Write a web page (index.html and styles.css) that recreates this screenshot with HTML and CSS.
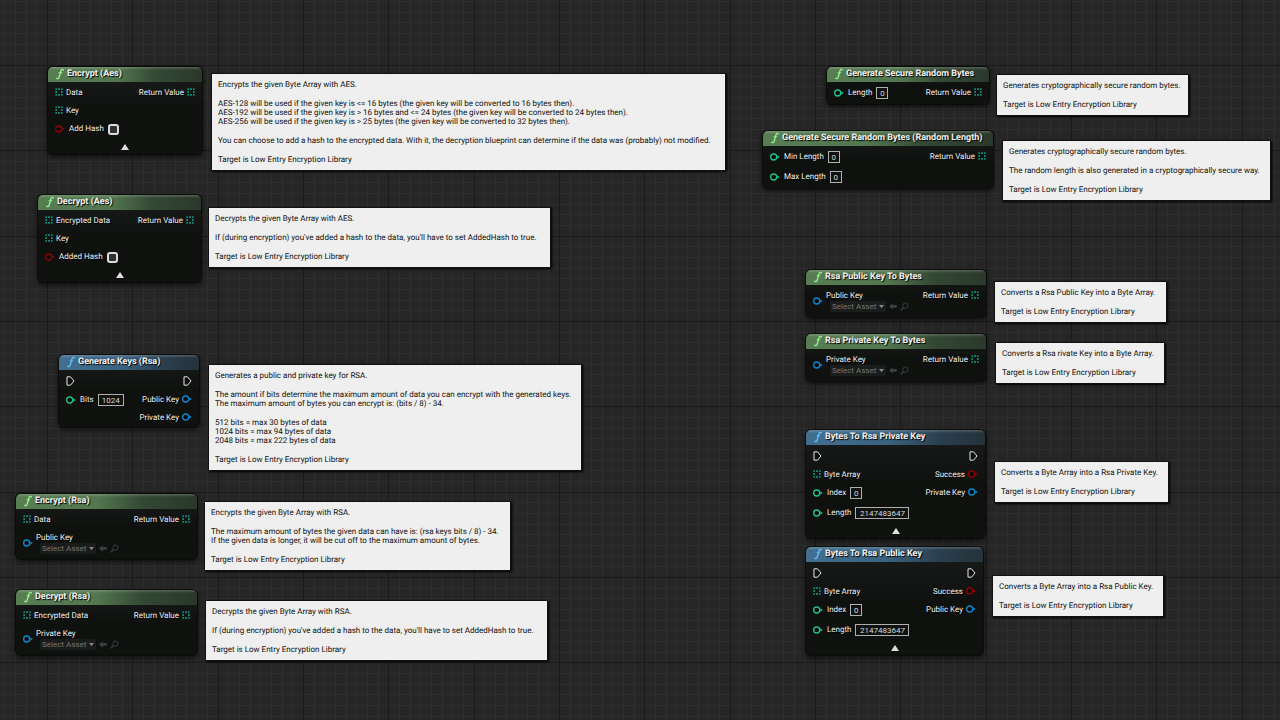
FILE: index.html
```html
<!DOCTYPE html>
<html lang="en">
<head>
    <meta charset="UTF-8">
    <meta name="viewport" content="width=device-width, initial-scale=1.0">
    <title>Low Entry Encryption Library</title>
    <link rel="stylesheet" href="styles.css">
</head>
<body>
    <!-- shared icons -->
    <svg class="symbols" width="0" height="0" aria-hidden="true">
        <symbol id="func" viewBox="0 0 10 14">
            <path d="M9.200 2.200C8.600 0.800 6.900 0.900 6.200 3L4 10.800C3.500 12.800 2 13.200 0.900 12.200" fill="none" stroke="currentColor" stroke-width="1.700" stroke-linecap="round"/>
            <path d="M3.200 5.400H7.800" stroke="currentColor" stroke-width="1.300"/>
        </symbol>
        <symbol id="array" viewBox="0 0 24 24">
            <path d="M1 1h5v5H1zM9 1h6v5H9zM18 1h5v5h-5zM1 9h5v6H1zM18 9h5v6h-5zM1 18h5v5H1zM9 18h6v5H9zM18 18h5v5h-5z" fill="currentColor"/>
        </symbol>
        <symbol id="pin" viewBox="0 0 30 24">
            <circle cx="11" cy="12" r="9" fill="#050807" stroke="currentColor" stroke-width="4"/>
            <path d="M22 7l7 5-7 5z" fill="currentColor"/>
        </symbol>
        <symbol id="exec" viewBox="0 0 27 30">
            <path d="M3 2.500h10.500L24 15 13.500 27.500H3z" fill="#0c0f0d" stroke="currentColor" stroke-width="3" stroke-linejoin="round"/>
        </symbol>
        <symbol id="expand" viewBox="0 0 24 18">
            <path d="M12 0l12 18H0z" fill="currentColor"/>
        </symbol>
        <symbol id="down" viewBox="0 0 18 10">
            <path d="M0 0h18L9 10z" fill="currentColor"/>
        </symbol>
        <symbol id="use-asset" viewBox="0 0 24 21">
            <path d="M11 1v5h12v8H11v6L0 10.500z" fill="currentColor"/>
        </symbol>
        <symbol id="browse" viewBox="0 0 27 27">
            <circle cx="16" cy="11" r="8" fill="none" stroke="currentColor" stroke-width="3"/>
            <path d="M10 17l-8 8" stroke="currentColor" stroke-width="4"/>
        </symbol>
    </svg>

    <main class="graph">
        <section class="node encrypt-aes">
            <h2 class="title"><svg class="func"><use href="#func"/></svg>Encrypt (Aes)</h2>
            <div class="pins">
                <div class="inputs">
                    <div class="row"><svg class="array"><use href="#array"/></svg>Data</div>
                    <div class="row"><svg class="array"><use href="#array"/></svg>Key</div>
                    <div class="row field"><svg class="pin bool"><use href="#pin"/></svg><label for="add-hash">Add Hash</label><input type="checkbox" id="add-hash"></div>
                </div>
                <div class="outputs">
                    <div class="row">Return Value<svg class="array"><use href="#array"/></svg></div>
                </div>
            </div>
            <button class="expand" aria-label="Collapse"><svg><use href="#expand"/></svg></button>
        </section>
        <div class="comment c-encrypt-aes">
            <p>Encrypts the given Byte Array with AES.</p>
            <p>AES-128 will be used if the given key is &lt;= 16 bytes (the given key will be converted to 16 bytes then).<br>AES-192 will be used if the given key is &gt; 16 bytes and &lt;= 24 bytes (the given key will be converted to 24 bytes then).<br>AES-256 will be used if the given key is &gt; 25 bytes (the given key will be converted to 32 bytes then).</p>
            <p>You can choose to add a hash to the encrypted data. With it, the decryption blueprint can determine if the data was (probably) not modified.</p>
            <p>Target is Low Entry Encryption Library</p>
        </div>

        <section class="node decrypt-aes">
            <h2 class="title"><svg class="func"><use href="#func"/></svg>Decrypt (Aes)</h2>
            <div class="pins">
                <div class="inputs">
                    <div class="row"><svg class="array"><use href="#array"/></svg>Encrypted Data</div>
                    <div class="row"><svg class="array"><use href="#array"/></svg>Key</div>
                    <div class="row field"><svg class="pin bool"><use href="#pin"/></svg><label for="added-hash">Added Hash</label><input type="checkbox" id="added-hash"></div>
                </div>
                <div class="outputs">
                    <div class="row">Return Value<svg class="array"><use href="#array"/></svg></div>
                </div>
            </div>
            <button class="expand" aria-label="Collapse"><svg><use href="#expand"/></svg></button>
        </section>
        <div class="comment c-decrypt-aes">
            <p>Decrypts the given Byte Array with AES.</p>
            <p>If (during encryption) you've added a hash to the data, you'll have to set AddedHash to true.</p>
            <p>Target is Low Entry Encryption Library</p>
        </div>

        <section class="node blue generate-keys">
            <h2 class="title"><svg class="func"><use href="#func"/></svg>Generate Keys (Rsa)</h2>
            <div class="pins">
                <div class="inputs">
                    <div class="row exec-row"><svg class="exec"><use href="#exec"/></svg></div>
                    <div class="row field"><svg class="pin int"><use href="#pin"/></svg><label for="bits">Bits</label><input type="text" id="bits" class="w-medium" value="1024"></div>
                </div>
                <div class="outputs">
                    <div class="row exec-row"><svg class="exec"><use href="#exec"/></svg></div>
                    <div class="row">Public Key<svg class="pin object"><use href="#pin"/></svg></div>
                    <div class="row">Private Key<svg class="pin object"><use href="#pin"/></svg></div>
                </div>
            </div>
        </section>
        <div class="comment c-generate-keys">
            <p>Generates a public and private key for RSA.</p>
            <p>The amount if bits determine the maximum amount of data you can encrypt with the generated keys.<br>The maximum amount of bytes you can encrypt is: (bits / 8) - 34.</p>
            <p>512 bits = max 30 bytes of data<br>1024 bits = max 94 bytes of data<br>2048 bits = max 222 bytes of data</p>
            <p>Target is Low Entry Encryption Library</p>
        </div>

        <section class="node encrypt-rsa">
            <h2 class="title"><svg class="func"><use href="#func"/></svg>Encrypt (Rsa)</h2>
            <div class="pins">
                <div class="inputs">
                    <div class="row"><svg class="array"><use href="#array"/></svg>Data</div>
                    <div class="row asset">
                        <svg class="pin object"><use href="#pin"/></svg>
                        <div class="picker">
                            <label for="encrypt-key">Public Key</label>
                            <div class="tools">
                                <span class="select"><select id="encrypt-key"><option>Select Asset</option></select><svg class="down"><use href="#down"/></svg></span>
                                <button aria-label="Use selected asset"><svg class="arrow"><use href="#use-asset"/></svg></button>
                                <button aria-label="Browse"><svg class="browse"><use href="#browse"/></svg></button>
                            </div>
                        </div>
                    </div>
                </div>
                <div class="outputs">
                    <div class="row">Return Value<svg class="array"><use href="#array"/></svg></div>
                </div>
            </div>
        </section>
        <div class="comment c-encrypt-rsa">
            <p>Encrypts the given Byte Array with RSA.</p>
            <p>The maximum amount of bytes the given data can have is: (rsa keys bits / 8) - 34.<br>If the given data is longer, it will be cut off to the maximum amount of bytes.</p>
            <p>Target is Low Entry Encryption Library</p>
        </div>

        <section class="node decrypt-rsa">
            <h2 class="title"><svg class="func"><use href="#func"/></svg>Decrypt (Rsa)</h2>
            <div class="pins">
                <div class="inputs">
                    <div class="row"><svg class="array"><use href="#array"/></svg>Encrypted Data</div>
                    <div class="row asset">
                        <svg class="pin object"><use href="#pin"/></svg>
                        <div class="picker">
                            <label for="decrypt-key">Private Key</label>
                            <div class="tools">
                                <span class="select"><select id="decrypt-key"><option>Select Asset</option></select><svg class="down"><use href="#down"/></svg></span>
                                <button aria-label="Use selected asset"><svg class="arrow"><use href="#use-asset"/></svg></button>
                                <button aria-label="Browse"><svg class="browse"><use href="#browse"/></svg></button>
                            </div>
                        </div>
                    </div>
                </div>
                <div class="outputs">
                    <div class="row">Return Value<svg class="array"><use href="#array"/></svg></div>
                </div>
            </div>
        </section>
        <div class="comment c-decrypt-rsa">
            <p>Decrypts the given Byte Array with RSA.</p>
            <p>If (during encryption) you've added a hash to the data, you'll have to set AddedHash to true.</p>
            <p>Target is Low Entry Encryption Library</p>
        </div>

        <section class="node secure-random">
            <h2 class="title"><svg class="func"><use href="#func"/></svg>Generate Secure Random Bytes</h2>
            <div class="pins">
                <div class="inputs">
                    <div class="row field"><svg class="pin int"><use href="#pin"/></svg><label for="length">Length</label><input type="text" id="length" value="0"></div>
                </div>
                <div class="outputs">
                    <div class="row">Return Value<svg class="array"><use href="#array"/></svg></div>
                </div>
            </div>
        </section>
        <div class="comment c-secure-random">
            <p>Generates cryptographically secure random bytes.</p>
            <p>Target is Low Entry Encryption Library</p>
        </div>

        <section class="node random-length">
            <h2 class="title"><svg class="func"><use href="#func"/></svg>Generate Secure Random Bytes (Random Length)</h2>
            <div class="pins">
                <div class="inputs">
                    <div class="row field"><svg class="pin int"><use href="#pin"/></svg><label for="min-length">Min Length</label><input type="text" id="min-length" value="0"></div>
                    <div class="row field"><svg class="pin int"><use href="#pin"/></svg><label for="max-length">Max Length</label><input type="text" id="max-length" value="0"></div>
                </div>
                <div class="outputs">
                    <div class="row">Return Value<svg class="array"><use href="#array"/></svg></div>
                </div>
            </div>
        </section>
        <div class="comment c-random-length">
            <p>Generates cryptographically secure random bytes.</p>
            <p>The random length is also generated in a cryptographically secure way.</p>
            <p>Target is Low Entry Encryption Library</p>
        </div>

        <section class="node public-to-bytes">
            <h2 class="title"><svg class="func"><use href="#func"/></svg>Rsa Public Key To Bytes</h2>
            <div class="pins">
                <div class="inputs">
                    <div class="row asset">
                        <svg class="pin object"><use href="#pin"/></svg>
                        <div class="picker">
                            <label for="public-key">Public Key</label>
                            <div class="tools">
                                <span class="select"><select id="public-key"><option>Select Asset</option></select><svg class="down"><use href="#down"/></svg></span>
                                <button aria-label="Use selected asset"><svg class="arrow"><use href="#use-asset"/></svg></button>
                                <button aria-label="Browse"><svg class="browse"><use href="#browse"/></svg></button>
                            </div>
                        </div>
                    </div>
                </div>
                <div class="outputs">
                    <div class="row">Return Value<svg class="array"><use href="#array"/></svg></div>
                </div>
            </div>
        </section>
        <div class="comment c-public-to-bytes">
            <p>Converts a Rsa Public Key into a Byte Array.</p>
            <p>Target is Low Entry Encryption Library</p>
        </div>

        <section class="node private-to-bytes">
            <h2 class="title"><svg class="func"><use href="#func"/></svg>Rsa Private Key To Bytes</h2>
            <div class="pins">
                <div class="inputs">
                    <div class="row asset">
                        <svg class="pin object"><use href="#pin"/></svg>
                        <div class="picker">
                            <label for="private-key">Private Key</label>
                            <div class="tools">
                                <span class="select"><select id="private-key"><option>Select Asset</option></select><svg class="down"><use href="#down"/></svg></span>
                                <button aria-label="Use selected asset"><svg class="arrow"><use href="#use-asset"/></svg></button>
                                <button aria-label="Browse"><svg class="browse"><use href="#browse"/></svg></button>
                            </div>
                        </div>
                    </div>
                </div>
                <div class="outputs">
                    <div class="row">Return Value<svg class="array"><use href="#array"/></svg></div>
                </div>
            </div>
        </section>
        <div class="comment c-private-to-bytes">
            <p>Converts a Rsa rivate Key into a Byte Array.</p>
            <p>Target is Low Entry Encryption Library</p>
        </div>

        <section class="node blue bytes-to-private">
            <h2 class="title"><svg class="func"><use href="#func"/></svg>Bytes To Rsa Private Key</h2>
            <div class="pins">
                <div class="inputs">
                    <div class="row exec-row"><svg class="exec"><use href="#exec"/></svg></div>
                    <div class="row"><svg class="array"><use href="#array"/></svg>Byte Array</div>
                    <div class="row field"><svg class="pin int"><use href="#pin"/></svg><label for="private-index">Index</label><input type="text" id="private-index" value="0"></div>
                    <div class="row field"><svg class="pin int"><use href="#pin"/></svg><label for="private-length">Length</label><input type="text" id="private-length" class="w-long" value="2147483647"></div>
                </div>
                <div class="outputs">
                    <div class="row exec-row"><svg class="exec"><use href="#exec"/></svg></div>
                    <div class="row">Success<svg class="pin bool"><use href="#pin"/></svg></div>
                    <div class="row">Private Key<svg class="pin object"><use href="#pin"/></svg></div>
                </div>
            </div>
            <button class="expand" aria-label="Collapse"><svg><use href="#expand"/></svg></button>
        </section>
        <div class="comment c-bytes-to-private">
            <p>Converts a Byte Array into a Rsa Private Key.</p>
            <p>Target is Low Entry Encryption Library</p>
        </div>

        <section class="node blue bytes-to-public">
            <h2 class="title"><svg class="func"><use href="#func"/></svg>Bytes To Rsa Public Key</h2>
            <div class="pins">
                <div class="inputs">
                    <div class="row exec-row"><svg class="exec"><use href="#exec"/></svg></div>
                    <div class="row"><svg class="array"><use href="#array"/></svg>Byte Array</div>
                    <div class="row field"><svg class="pin int"><use href="#pin"/></svg><label for="public-index">Index</label><input type="text" id="public-index" value="0"></div>
                    <div class="row field"><svg class="pin int"><use href="#pin"/></svg><label for="public-length">Length</label><input type="text" id="public-length" class="w-long" value="2147483647"></div>
                </div>
                <div class="outputs">
                    <div class="row exec-row"><svg class="exec"><use href="#exec"/></svg></div>
                    <div class="row">Success<svg class="pin bool"><use href="#pin"/></svg></div>
                    <div class="row">Public Key<svg class="pin object"><use href="#pin"/></svg></div>
                </div>
            </div>
            <button class="expand" aria-label="Collapse"><svg><use href="#expand"/></svg></button>
        </section>
        <div class="comment c-bytes-to-public">
            <p>Converts a Byte Array into a Rsa Public Key.</p>
            <p>Target is Low Entry Encryption Library</p>
        </div>
    </main>
</body>
</html>
```
FILE: styles.css
```css
* {
    box-sizing: border-box;
}

body {
    margin: 0;
    background-color: #262626;
    font-family: Roboto, sans-serif;
    font-size: 8px;
    text-rendering: geometricPrecision;
    color: #f0f0f0;
}

.symbols {
    position: absolute;
}

/* graph canvas: 8 small cells per large cell */
.graph {
    --cell: calc(32px / 3);
    --block: calc(256px / 3);
    position: relative;
    min-height: 100vh;
    overflow: hidden;
    background-image:
        repeating-linear-gradient(90deg, #1a1a1a 0 1px, transparent 1px var(--block)),
        repeating-linear-gradient(180deg, #1a1a1a 0 1px, transparent 1px var(--block)),
        repeating-linear-gradient(90deg, #2e2e2e 0 1px, transparent 1px var(--cell)),
        repeating-linear-gradient(180deg, #2e2e2e 0 1px, transparent 1px var(--cell));
    background-position: calc(47px - var(--block)) 0, 0 calc(65px - var(--block)), calc(47px - var(--block)) 0, 0 calc(65px - var(--block));
    background-size: 200% 200%;
}

/* nodes */
.node {
    position: absolute;
    border-radius: 5px;
    background: linear-gradient(#191c1a, #0e110e 50%, #0e110e);
    box-shadow: 0 0 0 1px #0a0c0a, 0 2px 5px 1px rgba(0, 0, 0, 0.6);
    overflow: hidden;
    text-shadow: 1px 1px 1px #000;
    white-space: nowrap;
}

.title {
    display: flex;
    align-items: center;
    gap: 3px;
    height: 15px;
    margin: 0;
    padding: 0 0 1px 8px;
    font-size: 9px;
    font-weight: bold;
    color: #f0f0f0;
    background: linear-gradient(rgba(255, 255, 255, 0.2), transparent 3px), linear-gradient(90deg, #587d53, #53774f 45%, #344834 70%, #2a382b);
}

.blue .title {
    background: linear-gradient(rgba(255, 255, 255, 0.2), transparent 3px), linear-gradient(90deg, #426f90, #3b6380 45%, #2a3f4f 75%, #253239);
}

.func {
    width: 8px;
    height: 12px;
    color: #93f28c;
}

.blue .func {
    color: #62bdf5;
}

.pins {
    display: flex;
    justify-content: space-between;
    padding: 1px 7px;
}

.inputs,
.outputs {
    display: flex;
    flex-direction: column;
}

.outputs {
    align-items: flex-end;
}

.row {
    display: flex;
    align-items: center;
    gap: 3px;
    height: 18px;
}

.exec-row {
    height: 19px;
}

.field {
    gap: 4px;
    height: 20px;
}

.field label {
    padding-bottom: 2px;
}

.array {
    width: 8px;
    height: 8px;
    color: #0b8a77;
}

.pin {
    width: 10px;
    height: 8px;
}

.bool {
    color: #920101;
}

.int {
    color: #1fc48b;
}

.object {
    color: #0c86cf;
}

.exec {
    width: 9px;
    height: 10px;
    color: #e8e8e8;
}

input {
    margin: 0;
    font: inherit;
}

input[type="text"] {
    width: 12px;
    height: 12px;
    padding: 0;
    border: 1px solid #b0b0b0;
    background-color: #101310;
    color: #d8d8d8;
    text-align: center;
}

input.w-medium {
    width: 26px;
}

input.w-long {
    width: 54px;
}

input[type="checkbox"] {
    appearance: none;
    width: 11px;
    height: 11px;
    border: 2px solid #dcdcdc;
    border-radius: 3px;
    background-color: #303030;
}

button {
    display: flex;
    padding: 0;
    border: none;
    background: none;
    color: #3c3f3d;
}

.expand {
    width: 100%;
    height: 14px;
    justify-content: center;
    align-items: center;
    color: #dedede;
}

.expand svg {
    width: 8px;
    height: 6px;
}

.asset {
    height: 30px;
}

.picker {
    display: flex;
    flex-direction: column;
    padding-bottom: 1px;
}

.picker label {
    line-height: 11px;
}

.tools {
    display: flex;
    align-items: center;
    gap: 3px;
    padding-left: 4px;
}

.select {
    display: flex;
    align-items: center;
    gap: 2px;
    height: 11px;
    padding: 0 2px;
    border-radius: 2px;
    background-color: #1a1d1b;
    color: #8a8a8a;
}

select {
    appearance: none;
    padding: 0;
    border: none;
    background: none;
    color: #777;
    font: inherit;
}

.down {
    width: 5px;
    height: 3px;
}

.arrow {
    width: 8px;
    height: 7px;
}

.browse {
    width: 9px;
    height: 9px;
}

/* comment boxes */
.comment {
    position: absolute;
    padding: 6px;
    background-color: #efefef;
    box-shadow: 0 0 0 1px #111, 1px 1px 2px 1px #000;
    color: #111;
    line-height: 9px;
    white-space: nowrap;
}

.comment p {
    margin: 0 0 10px;
}

.comment p:last-child {
    margin-bottom: 0;
}

/* places on the canvas */
.encrypt-aes { left: 48px; top: 67px; width: 154px; }
.c-encrypt-aes { left: 212px; top: 74px; width: 513px; }

.decrypt-aes { left: 38px; top: 195px; width: 163px; }
.c-decrypt-aes { left: 209px; top: 208px; width: 341px; }

.generate-keys { left: 59px; top: 355px; width: 140px; }
.c-generate-keys { left: 209px; top: 365px; width: 372px; }

.encrypt-rsa { left: 16px; top: 494px; width: 181px; }
.c-encrypt-rsa { left: 205px; top: 502px; width: 305px; }

.decrypt-rsa { left: 16px; top: 590px; width: 181px; }
.c-decrypt-rsa { left: 206px; top: 601px; width: 341px; }

.secure-random { left: 827px; top: 67px; width: 162px; }
.c-secure-random { left: 997px; top: 75px; width: 191px; }

.random-length { left: 763px; top: 131px; width: 230px; }
.c-random-length { left: 1003px; top: 141px; width: 267px; }

.public-to-bytes { left: 806px; top: 270px; width: 180px; }
.c-public-to-bytes { left: 995px; top: 282px; width: 171px; }

.private-to-bytes { left: 806px; top: 334px; width: 180px; }
.c-private-to-bytes { left: 996px; top: 343px; width: 168px; }

.bytes-to-private { left: 806px; top: 430px; width: 179px; }
.c-bytes-to-private { left: 995px; top: 462px; width: 173px; }

.bytes-to-public { left: 806px; top: 547px; width: 177px; }
.c-bytes-to-public { left: 993px; top: 576px; width: 170px; }
```
